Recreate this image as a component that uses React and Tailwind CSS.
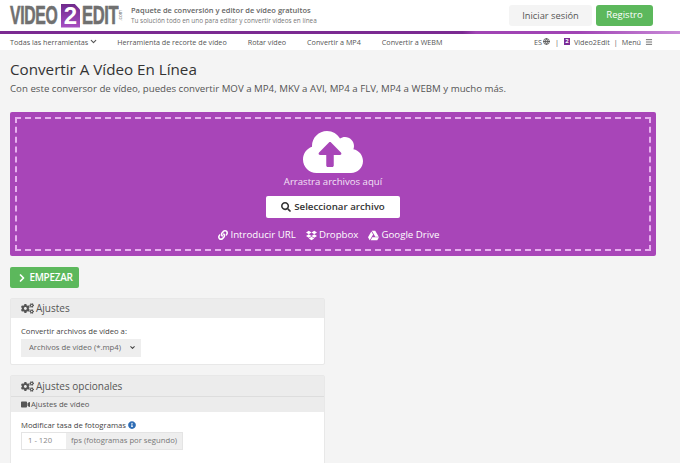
import { ChevronDown, ChevronRight, Globe, Menu } from 'lucide-react';
import { FaCloudUploadAlt, FaDropbox, FaCogs, FaLink, FaSearch, FaVideo, FaInfoCircle, FaGoogleDrive } from 'react-icons/fa';

const NAV = ['Herramienta de recorte de vídeo', 'Rotar vídeo', 'Convertir a MP4', 'Convertir a WEBM'];

function Logo() {
  return (
    <div className="flex items-center h-[31px] w-[121px] shrink-0 font-['Liberation_Sans',sans-serif] font-bold text-[#707070] text-[25px] [-webkit-text-stroke:0.6px_#707070]">
      <span className="inline-block w-[49px] whitespace-nowrap origin-left scale-x-[0.63] tracking-[-0.5px]">VIDEO</span>
      <span className="ml-[2px] w-[19px] h-[24px] bg-gradient-to-b from-[#6f2a8c] to-[#a94fc4] text-white [-webkit-text-stroke:0] flex items-center justify-center text-[24px] [clip-path:polygon(0_0,70%_0,100%_25%,100%_100%,0_100%)]">2</span>
      <span className="ml-[2px] inline-block w-[36px] whitespace-nowrap origin-left scale-x-[0.66] tracking-[-0.5px]">EDIT</span>
      <span className="text-[5px] leading-none font-normal [-webkit-text-stroke:0] [writing-mode:vertical-rl] rotate-180">.com</span>
    </div>
  );
}

export default function App() {
  return (
    <div className="h-[463px] overflow-hidden bg-[#f4f4f4] font-['Open_Sans',sans-serif] text-[#444]">
      <header className="bg-white">
        <div className="flex items-center h-[31px] pl-[10px] pr-[27px]">
          <Logo />
          <div className="leading-none whitespace-nowrap">
            <p className="text-[7.5px] font-semibold text-[#666] mb-[3px]">Paquete de conversión y editor de vídeo gratuitos</p>
            <p className="text-[6.4px] text-[#777]">Tu solución todo en uno para editar y convertir vídeos en línea</p>
          </div>
          <div className="ml-auto flex gap-[4px]">
            <button className="w-[83px] h-[21px] rounded-[3px] bg-[#f4f4f4] text-[9.3px] text-[#555]">Iniciar sesión</button>
            <button className="w-[57px] h-[21px] rounded-[3px] bg-[#5cb85c] text-[9.5px] text-white">Registro</button>
          </div>
        </div>
        <div className="h-[3px] bg-[linear-gradient(to_right,#7b2a92_0%,#7b2a92_68%,#a044b4_70%,#a044b4_85%,#c98ad8_100%)]" />
        <nav className="flex items-center h-[16px] pl-[10px] pr-[27px] text-[7.2px] font-medium text-[#555] whitespace-nowrap">
          <span className="flex items-center gap-[1px] mr-[19px]">Todas las herramientas <ChevronDown size={9} strokeWidth={3} /></span>
          {NAV.map((item) => (
            <span key={item} className="mr-[21px]">{item}</span>
          ))}
          <div className="ml-auto flex items-center gap-[4px]">
            <span className="flex items-center gap-[1px]">ES <Globe size={7} strokeWidth={3} /></span>
            <span className="mx-[1px]">|</span>
            <span className="w-[6px] h-[7px] bg-[#7b2d96] text-white text-[6px] leading-[7px] text-center font-bold">2</span>
            <span>Video2Edit</span>
            <span>|</span>
            <span>Menú</span>
            <Menu size={8} strokeWidth={2.5} />
          </div>
        </nav>
      </header>

      <main className="px-[10px] pt-[9px]">
        <h1 className="text-[15.2px] leading-[20px] font-medium text-[#333]">Convertir A Vídeo En Línea</h1>
        <p className="mt-[2px] text-[9.7px] leading-[16px] text-[#555]">Con este conversor de vídeo, puedes convertir MOV a MP4, MKV a AVI, MP4 a FLV, MP4 a WEBM y mucho más.</p>

        <section className="mt-[15px] w-[646px] h-[144px] rounded-[2px] bg-[#a845b8] p-[5px] text-white">
          <div className="h-[134px] border-2 border-dashed border-[#e6b0ee] flex flex-col items-center">
            <FaCloudUploadAlt className="mt-[3px]" size={60} />
            <p className="text-[9.6px] leading-[14px] -mt-[7px] text-[#f3e3f6]">Arrastra archivos aquí</p>
            <button className="mt-[7px] w-[134px] h-[22px] rounded-[2px] bg-white text-[#333] text-[9.7px] font-semibold flex items-center justify-center gap-[3px]">
              <FaSearch size={10} /> Seleccionar archivo
            </button>
            <div className="mt-[10px] pr-[8px] flex items-center gap-[10px] text-[9.7px] text-white whitespace-nowrap">
              <span className="flex items-center gap-[2px]"><FaLink size={10} /> Introducir URL</span>
              <span className="flex items-center gap-[2px]"><FaDropbox size={11} /> Dropbox</span>
              <span className="flex items-center gap-[2px]"><FaGoogleDrive size={11} /> Google Drive</span>
            </div>
          </div>
        </section>

        <button className="mt-[11px] w-[69px] h-[21px] rounded-[2px] bg-[#5cb85c] text-white text-[10px] tracking-[-0.3px] font-semibold flex items-center justify-center gap-[1px]">
          <ChevronRight size={12} strokeWidth={3.5} /> EMPEZAR
        </button>

        <section className="mt-[10px] w-[315px] h-[67px] bg-white border border-[#e8e8e8] rounded-[2px]">
          <h2 className="h-[19px] bg-[#ececec] px-[10px] flex items-center gap-[2px] text-[10px] font-medium text-[#555]">
            <FaCogs size={13} /> Ajustes
          </h2>
          <div className="px-[10px] pt-[7px]">
            <label className="block text-[7.7px] leading-[12px] font-medium text-[#444]">Convertir archivos de vídeo a:</label>
            <div className="relative mt-[2px] w-[120px]">
              <select className="block w-full h-[18px] appearance-none bg-[#eee] pl-[8px] text-[7.7px] text-[#666]">
                <option>Archivos de vídeo (*.mp4)</option>
              </select>
              <ChevronDown size={7} strokeWidth={3.5} className="absolute right-[5px] top-[5px] text-[#444]" />
            </div>
          </div>
        </section>

        <section className="mt-[10px] w-[315px] h-[200px] bg-white border border-[#e8e8e8] rounded-[2px]">
          <h2 className="h-[20px] bg-[#ececec] px-[10px] flex items-center gap-[2px] text-[10px] font-medium text-[#555]">
            <FaCogs size={13} /> Ajustes opcionales
          </h2>
          <h3 className="h-[16px] bg-[#ececec] border-t border-[#ddd] px-[10px] flex items-center gap-[1px] text-[7.7px] font-medium text-[#555]">
            <FaVideo size={9} /> Ajustes de vídeo
          </h3>
          <div className="px-[10px] pt-[7px]">
            <label className="flex items-center gap-[2px] text-[7.7px] leading-[12px] font-medium text-[#444] whitespace-nowrap">
              Modificar tasa de fotogramas <FaInfoCircle size={8} className="text-[#2f6db5]" />
            </label>
            <div className="mt-[1px] flex w-[162px] h-[18px] border border-[#e4e4e4] text-[7.7px] whitespace-nowrap">
              <input placeholder="1 - 120" className="w-[44px] bg-white pl-[6px] text-[#888] placeholder:text-[#888]" />
              <span className="flex-1 bg-[#eee] flex items-center justify-center text-[#777]">fps (fotogramas por segundo)</span>
            </div>
          </div>
        </section>
      </main>
    </div>
  );
}
